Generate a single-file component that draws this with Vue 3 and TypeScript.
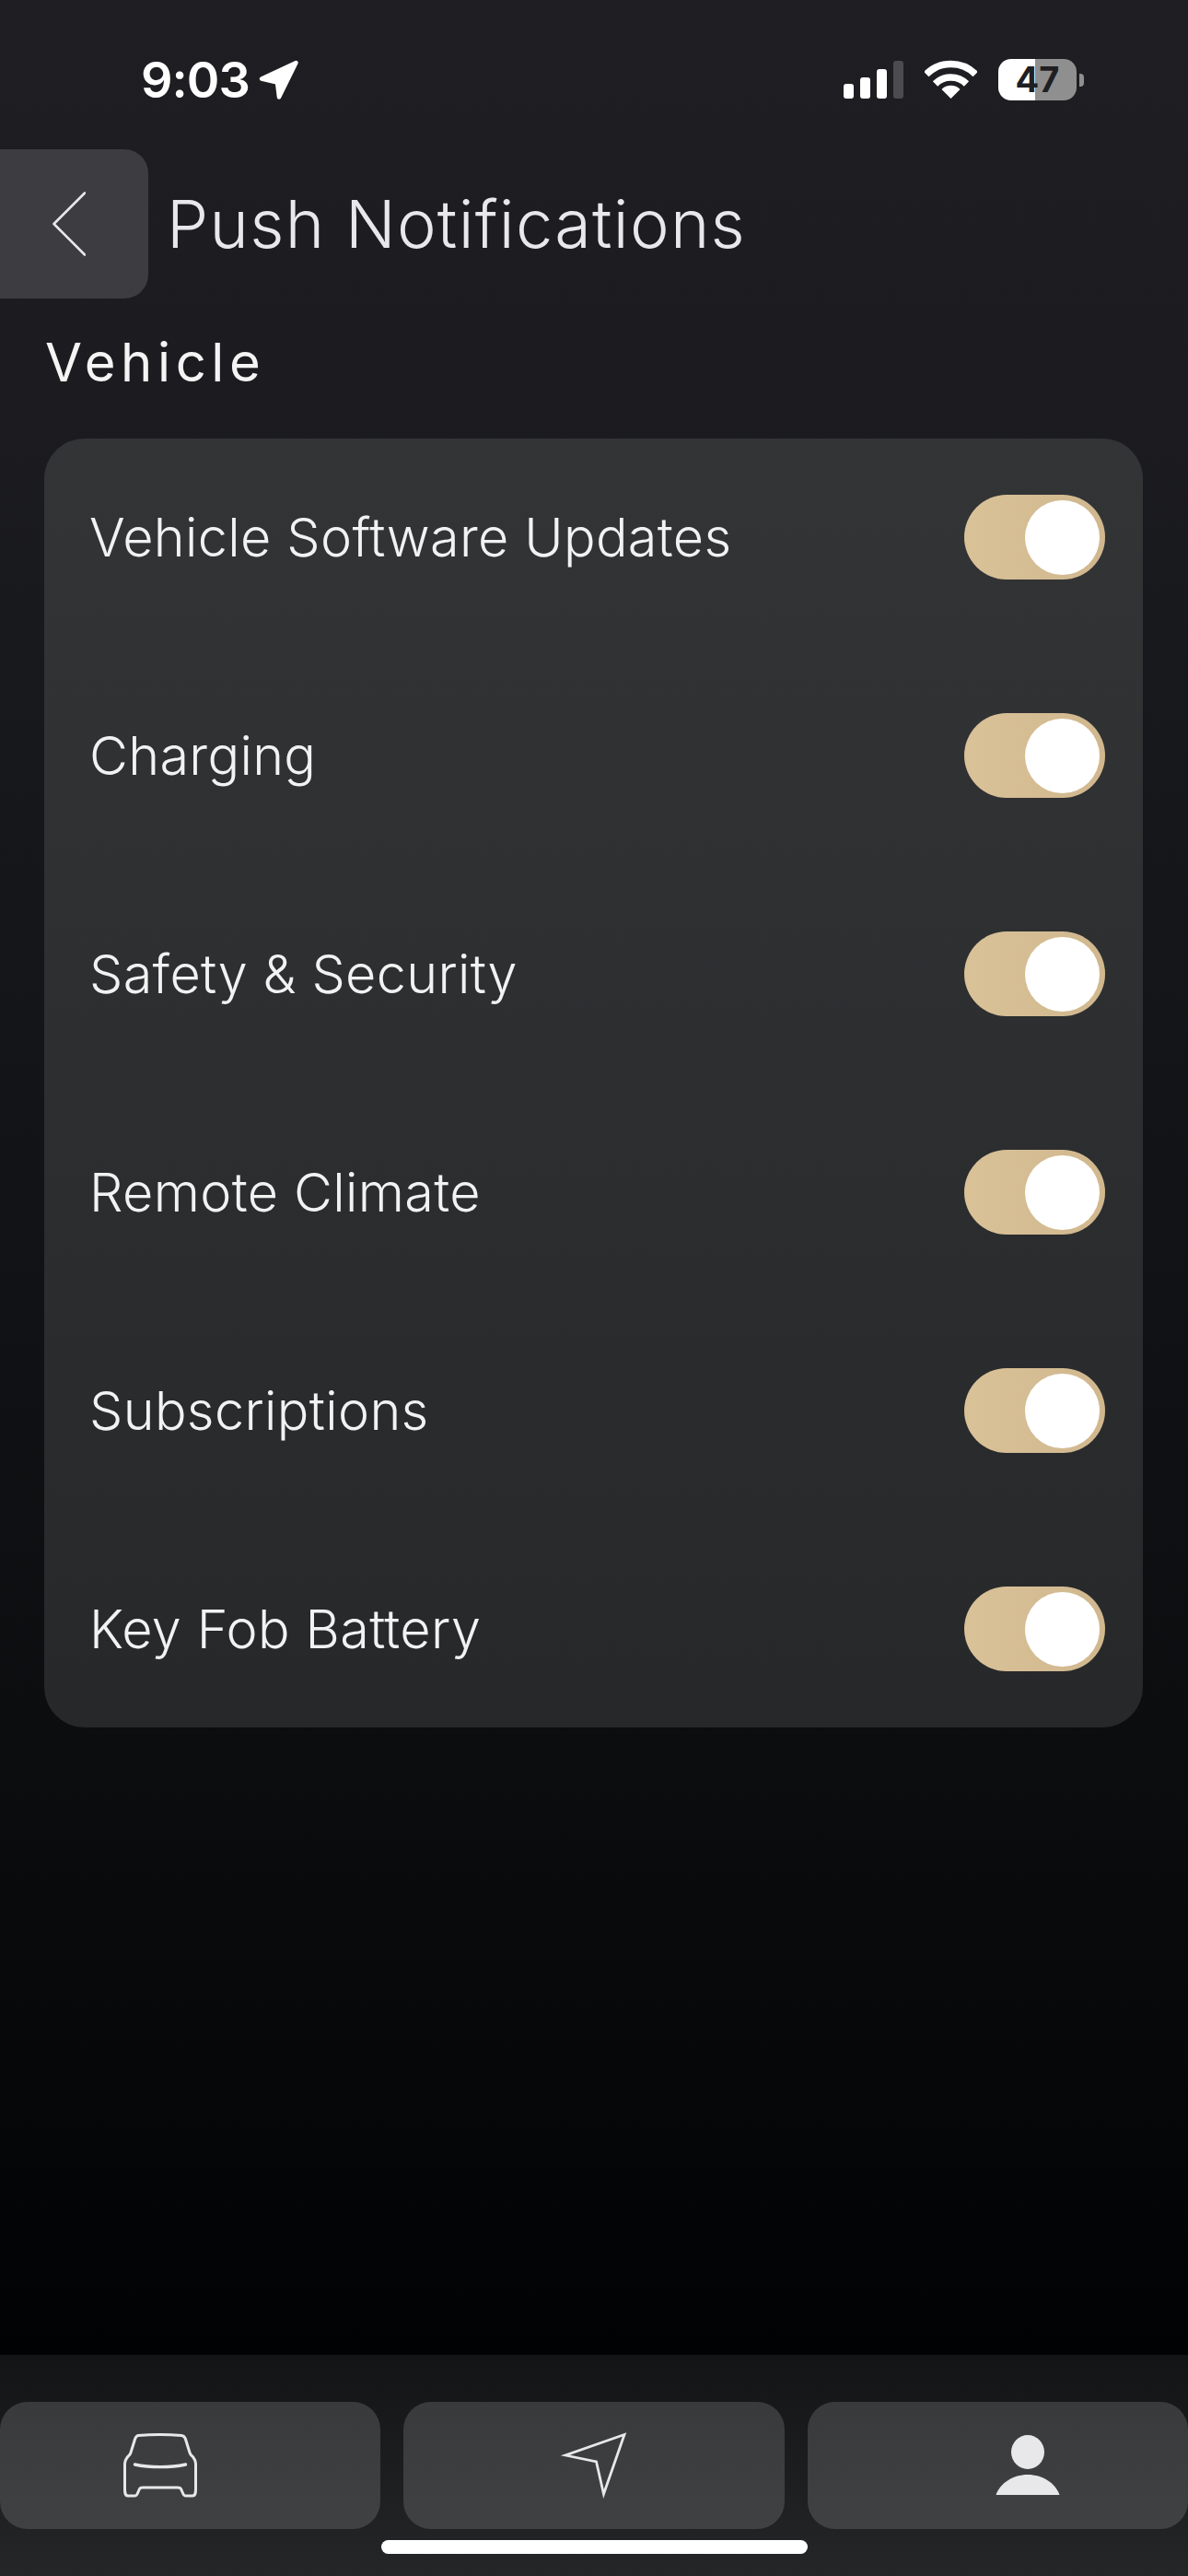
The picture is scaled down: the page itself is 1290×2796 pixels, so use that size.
<script setup lang="ts">
const rows: string[] = [
  'Vehicle Software Updates',
  'Charging',
  'Safety & Security',
  'Remote Climate',
  'Subscriptions',
  'Key Fob Battery',
]
</script>

<template>
  <div class="page">
    <div class="status">
      <div class="time-group">
        <span class="time">9:03</span>
        <svg class="loc" width="44" height="44" viewBox="0 0 44 44">
          <path d="M40.500 3 3 20.500 20 24.500 22 40.500Z" fill="#fff" stroke="#fff" stroke-width="4.500" stroke-linejoin="round" />
        </svg>
      </div>
      <div class="status-right">
        <div class="signal">
          <i class="bar b1"></i><i class="bar b2"></i><i class="bar b3"></i><i class="bar b4"></i>
        </div>
        <svg class="wifi" width="57" height="43" viewBox="0 0 57 43">
          <path d="M1.800 15.500A38 38 0 0 1 55.200 15.500" fill="none" stroke="#fff" stroke-width="7.500" />
          <path d="M11.500 26A24 24 0 0 1 45.500 26" fill="none" stroke="#fff" stroke-width="7.500" />
          <path d="M28.500 42 18.500 32A14 14 0 0 1 38.500 32Z" fill="#fff" />
        </svg>
        <div class="battery">
          <div class="cell">47</div>
          <i class="cap"></i>
        </div>
      </div>
    </div>

    <header class="head">
      <button class="back" type="button" aria-label="Back">
        <svg width="36" height="70" viewBox="0 0 36 70">
          <path d="M35 1.500 1.500 35 35 68.500" fill="none" stroke="#e8e8ea" stroke-width="2.600" stroke-linecap="round" stroke-linejoin="round" />
        </svg>
      </button>
      <h1 class="title">Push Notifications</h1>
    </header>

    <h2 class="section">Vehicle</h2>

    <section class="card">
      <div v-for="row in rows" :key="row" class="row">
        <span class="label">{{ row }}</span>
        <span class="toggle"><i class="knob"></i></span>
      </div>
    </section>

    <footer class="tabbar">
      <div class="tabs">
        <div class="tab tab-left">
          <svg width="82" height="70" viewBox="0 0 82 70">
            <path d="M17 2.500C30 1.500 51 1.500 64 2.500 66.500 2.800 67.500 4 68.300 6L73 21C73.700 23.500 75 24 77 26.500 79 29 79.500 30 79.500 33V60C79.500 64 79.500 68 76 68H69C67 68 66.500 67.500 65.500 65L63.500 60.500C63 59.500 62 59 60 59H22C20 59 19 59.500 18.500 60.500L16.500 65C15.500 67.500 15 68 13 68H6C2.500 68 2.500 64 2.500 60V33C2.500 30 3 29 5 26.500 7 24 8.300 23.500 9 21L13.700 6C14.500 4 15.500 2.800 17 2.500Z" fill="none" stroke="#e8e8ea" stroke-width="3" stroke-linejoin="round" />
            <path d="M13.500 34C30 37.500 52 37.500 68.500 34" fill="none" stroke="#e8e8ea" stroke-width="3.400" stroke-linecap="round" />
          </svg>
        </div>
        <div class="tab">
          <svg width="74" height="72" viewBox="0 0 74 72">
            <path d="M70 2.500 6 25 39.500 32 47.500 67Z" fill="none" stroke="#e8e8ea" stroke-width="2.800" stroke-linejoin="miter" />
          </svg>
        </div>
        <div class="tab tab-right">
          <svg width="70" height="66" viewBox="0 0 70 66">
            <ellipse cx="35" cy="18.500" rx="18" ry="18.500" fill="#e8e8ea" />
            <path d="M0.500 65C5 52 19 43 35 43S65 52 69.500 65Z" fill="#e8e8ea" />
          </svg>
        </div>
      </div>
      <div class="indicator"></div>
    </footer>
  </div>
</template>

<style>
html,
body {
  margin: 0;
  background: #000;
}
</style>

<style scoped>
.page {
  width: 1290px;
  height: 2796px;
  display: flex;
  flex-direction: column;
  overflow: hidden;
  font-family: Inter, "Liberation Sans", sans-serif;
  background: linear-gradient(#1f1f23 0, #1c1c20 420px, #17181b 800px, #0c0d0f 1900px, #010204 2556px);
  color: #fff;
}
.status {
  height: 162px;
  box-sizing: border-box;
  padding: 64px 113px 0 153px;
  display: flex;
  justify-content: space-between;
  align-items: flex-start;
}
.time-group {
  display: flex;
  align-items: center;
  gap: 10px;
  height: 45px;
}
.time {
  font-size: 54px;
  font-weight: 600;
  line-height: 45px;
  letter-spacing: -1px;
}
.loc {
  display: block;
}
.status-right {
  display: flex;
  align-items: flex-end;
  height: 45px;
}
.signal {
  display: flex;
  align-items: flex-end;
  gap: 7px;
  height: 41px;
  margin-bottom: 2px;
}
.bar {
  display: block;
  width: 11px;
  border-radius: 3px;
  background: #fff;
}
.b1 { height: 16px; }
.b2 { height: 23px; }
.b3 { height: 32px; }
.b4 { height: 41px; background: #4c4c50; }
.wifi {
  display: block;
  margin: 0 23px 1px 23px;
}
.battery {
  display: flex;
  align-items: center;
  gap: 3px;
}
.cell {
  width: 85px;
  height: 45px;
  border-radius: 14px;
  background: linear-gradient(90deg, #fff 47%, #8f8f8f 47%);
  color: #1f1f23;
  font-size: 38px;
  font-weight: 700;
  line-height: 45px;
  text-align: center;
}
.cap {
  display: block;
  width: 5px;
  height: 14px;
  border-radius: 0 4px 4px 0;
  background: #8f8f8f;
}
.head {
  display: flex;
  align-items: center;
  gap: 20px;
  height: 162px;
}
.back {
  width: 161px;
  height: 162px;
  padding: 0 0 0 57px;
  border: 0;
  border-radius: 0 26px 26px 0;
  background: #3c3c41;
  display: flex;
  align-items: center;
  justify-content: flex-start;
}
.back svg {
  display: block;
}
.title {
  margin: 0;
  font-size: 72px;
  font-weight: 300;
  line-height: 80px;
  letter-spacing: 1.300px;
  color: #e8e8ec;
}
.section {
  margin: 38px 0 0 49px;
  height: 62px;
  font-size: 58px;
  font-weight: 400;
  line-height: 62px;
  letter-spacing: 5.600px;
  color: #f4f4f4;
}
.card {
  margin: 52px 49px 0 48px;
  height: 1399px;
  box-sizing: border-box;
  padding: 61px 41px 61px 49px;
  border-radius: 44px;
  background: linear-gradient(#333436, #2c2e30 50%, #27282a);
  display: flex;
  flex-direction: column;
  gap: 145px;
}
.row {
  height: 92px;
  display: flex;
  align-items: center;
  justify-content: space-between;
}
.label {
  font-size: 57.500px;
  font-weight: 300;
  letter-spacing: 0.350px;
  color: #f2f2f2;
}
.toggle {
  width: 153px;
  height: 92px;
  box-sizing: border-box;
  padding: 6px 6px 6px 66px;
  border-radius: 46px;
  background: linear-gradient(90deg, #d9c198, #d0b78e);
  display: block;
}
.knob {
  display: block;
  width: 81px;
  height: 81px;
  border-radius: 50%;
  background: #fff;
}
.tabbar {
  margin-top: auto;
  height: 240px;
  box-sizing: border-box;
  padding-top: 51px;
  background: linear-gradient(#131416, #252628);
}
.tabs {
  display: grid;
  grid-template-columns: repeat(3, 1fr);
  gap: 25px;
}
.tab {
  height: 138px;
  border-radius: 30px;
  background: linear-gradient(#393a3c, #404143);
  display: flex;
  align-items: center;
  justify-content: center;
}
.tab svg {
  display: block;
}
.tab-left {
  padding-right: 65px;
}
.tab-right {
  padding-left: 65px;
}
.indicator {
  width: 463px;
  height: 15px;
  margin: 12px auto 0;
  border-radius: 8px;
  background: #fff;
}
</style>
